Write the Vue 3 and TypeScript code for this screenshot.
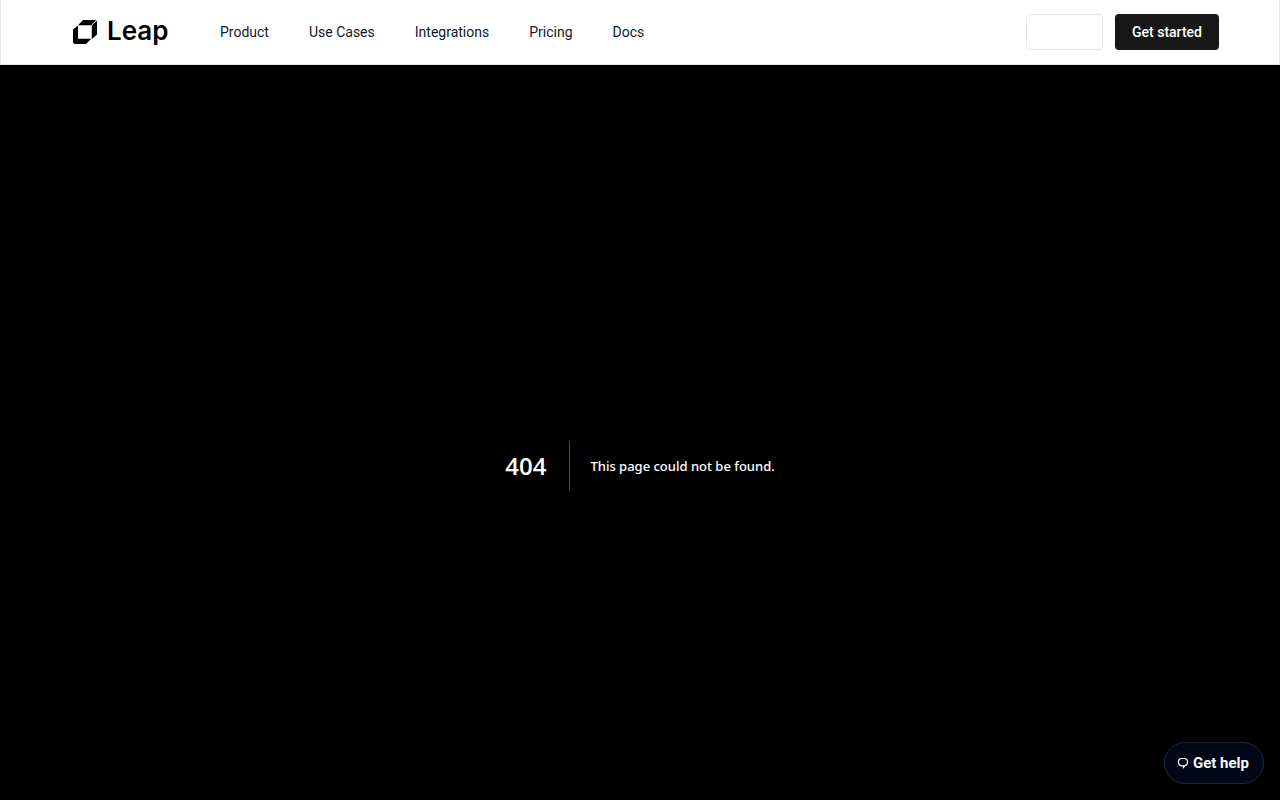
<script setup lang="ts">
interface NavLink {
  label: string
  href: string
}

const links: NavLink[] = [
  { label: 'Product', href: '#product' },
  { label: 'Use Cases', href: '#use-cases' },
  { label: 'Integrations', href: '#integrations' },
  { label: 'Pricing', href: '#pricing' },
  { label: 'Docs', href: '#docs' },
]
</script>

<template>
  <div class="page">
    <header class="header">
      <a class="brand" href="#home">
        <svg class="mark" viewBox="0 0 24 24" aria-hidden="true">
          <path d="M10 0H23.2L18.2 5.2H5Z" />
          <path d="M24 0.6V14.5L18.8 19.2V5.6Z" />
          <path d="M0 9.6L5 5.4V18.8H18.2L13 24H1.6L0 22.4Z" />
        </svg>
        <span>Leap</span>
      </a>
      <nav class="nav" aria-label="Main">
        <a v-for="link in links" :key="link.label" :href="link.href">{{ link.label }}</a>
      </nav>
      <div class="actions">
        <button class="sign-in" type="button" aria-label="Sign in"></button>
        <button class="start" type="button">Get started</button>
      </div>
    </header>
    <main class="error">
      <h1>404</h1>
      <h2>This page could not be found.</h2>
    </main>
    <button class="help" type="button">
      <svg viewBox="0 0 12 12" aria-hidden="true">
        <path d="M4 1.5H8Q10.6 2 10.6 5Q10.6 8 8 8.6L6.5 10.3V8.8H4Q1.4 8 1.4 5Q1.4 2 4 1.5Z" />
      </svg>
      <span>Get help</span>
    </button>
  </div>
</template>

<style>
body {
  margin: 0;
  background: #000;
}
</style>

<style scoped>
.page {
  height: 100vh;
  overflow: hidden;
  background: #000;
  font-family: Roboto, "Liberation Sans", sans-serif;
}

.header {
  display: flex;
  align-items: center;
  box-sizing: border-box;
  height: 65px;
  padding: 0 60px 0 72px;
  background: #fff;
  border: 1px solid #e5e7eb;
  border-top: 0;
}

.brand {
  display: flex;
  align-items: center;
  gap: 10px;
  width: 147px;
  color: #000;
  font: 600 26px/32px Inter, sans-serif;
  text-decoration: none;
}

.brand span {
  padding-bottom: 2px;
}

.mark {
  width: 24px;
  height: 24px;
}

.nav {
  display: flex;
  gap: 40px;
}

.nav a {
  color: #111827;
  font-size: 14px;
  line-height: 20px;
  text-decoration: none;
}

.actions {
  display: flex;
  gap: 12px;
  margin-left: auto;
}

.actions button {
  box-sizing: border-box;
  height: 36px;
  border-radius: 4px;
  font: 500 14px/20px Roboto, sans-serif;
}

.sign-in {
  width: 77px;
  background: #fff;
  border: 1px solid #e5e7eb;
  color: #fff;
}

.start {
  width: 104px;
  padding: 0;
  background: #171717;
  border: 0;
  color: #fff;
}

.error {
  display: flex;
  align-items: center;
  justify-content: center;
  height: 100vh;
  color: #fff;
  font-family: "Noto Sans", sans-serif;
}

.error h1 {
  margin: 0 20px 0 0;
  padding-right: 23px;
  border-right: 1px solid #4d4d4d;
  font-family: "Open Sans", sans-serif;
  font-size: 24px;
  font-weight: 600;
  line-height: 49px;
}

.error h2 {
  margin: 0;
  padding-top: 2px;
  font-size: 13px;
  font-weight: 500;
  line-height: 28px;
}

.help {
  position: fixed;
  right: 16px;
  bottom: 16px;
  display: flex;
  align-items: center;
  justify-content: center;
  gap: 4px;
  box-sizing: border-box;
  width: 100px;
  height: 42px;
  padding: 0 2px 0 0;
  background: #020617;
  border: 1px solid #1e293b;
  border-radius: 21px;
  color: #f8fafc;
  font: 700 15px/20px Roboto, sans-serif;
}

.help svg {
  width: 12px;
  height: 12px;
  fill: none;
  stroke: currentColor;
  stroke-width: 1.2;
}
</style>
